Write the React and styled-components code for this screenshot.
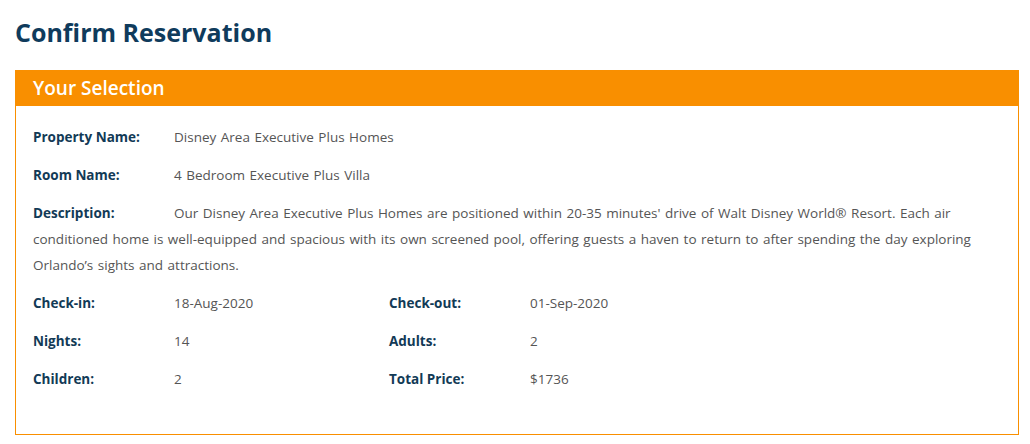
import React from 'react';
import styled, { createGlobalStyle } from 'styled-components';

const GlobalStyle = createGlobalStyle`
  body {
    margin: 0;
    background: #fff;
    font-family: "Open Sans", "Liberation Sans", sans-serif;
  }
`;

const Page = styled.div`
  padding: 14px 11px 0 15px;
`;

const Title = styled.h1`
  margin: 0 0 20px;
  font-size: 25px;
  line-height: 36px;
  font-weight: 700;
  color: #0f3b5c;
`;

const Panel = styled.section`
  border: 1px solid #f98f00;
  border-top: none;
`;

const PanelHeader = styled.h2`
  margin: 0;
  height: 36px;
  padding: 0 17px;
  background: #f98f00;
  color: #fff;
  font-size: 19px;
  font-weight: 600;
  line-height: 36px;
`;

const PanelBody = styled.div`
  padding: 18px 17px 42px;
  font-size: 13.5px;
  word-spacing: 1px;
  line-height: 26px;
  color: #555;
`;

const Row = styled.div`
  display: grid;
  grid-template-columns: ${p => (p.$pair ? '356px 1fr' : '1fr')};
  margin-bottom: 12px;
  &:last-child {
    margin-bottom: 0;
  }
`;

const Field = styled.div`
  display: flex;
`;

const Label = styled.span`
  display: inline-block;
  width: 141px;
  flex-shrink: 0;
  font-weight: 700;
  word-spacing: 0;
  color: #123a56;
`;

const Value = styled.span`
  color: #555;
`;

const Paragraph = styled.p`
  margin: 0 0 12px;
`;

const pairs = [
  [['Check-in:', '18-Aug-2020'], ['Check-out:', '01-Sep-2020']],
  [['Nights:', '14'], ['Adults:', '2']],
  [['Children:', '2'], ['Total Price:', '$1736']],
];

export default function App() {
  return (
    <Page>
      <GlobalStyle />
      <Title>Confirm Reservation</Title>
      <Panel>
        <PanelHeader>Your Selection</PanelHeader>
        <PanelBody>
          <Row>
            <Field>
              <Label>Property Name:</Label>
              <Value>Disney Area Executive Plus Homes</Value>
            </Field>
          </Row>
          <Row>
            <Field>
              <Label>Room Name:</Label>
              <Value>4 Bedroom Executive Plus Villa</Value>
            </Field>
          </Row>
          <Paragraph>
            <Label>Description:</Label>
            Our Disney Area Executive Plus Homes are positioned within 20-35 minutes' drive of Walt Disney World® Resort. Each air conditioned home is well-equipped and spacious with its own screened pool, offering guests a haven to return to after spending the day exploring Orlando’s sights and attractions.
          </Paragraph>
          {pairs.map((pair, i) => (
            <Row $pair key={i}>
              {pair.map(([label, value]) => (
                <Field key={label}>
                  <Label>{label}</Label>
                  <Value>{value}</Value>
                </Field>
              ))}
            </Row>
          ))}
        </PanelBody>
      </Panel>
    </Page>
  );
}
